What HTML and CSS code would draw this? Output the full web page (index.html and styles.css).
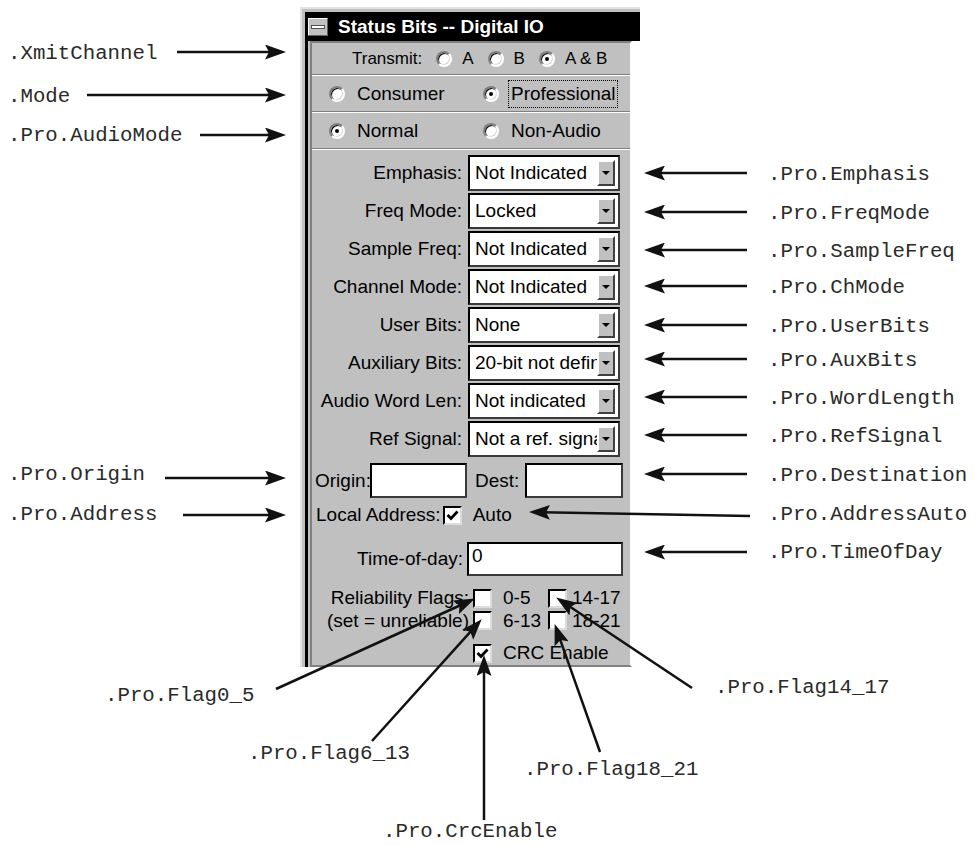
FILE: index.html
```html
<!DOCTYPE html>
<html>
<head>
<meta charset="utf-8">
<title>Status Bits -- Digital IO</title>
<link rel="stylesheet" href="styles.css">
</head>
<body>
<div class="canvas">
  <div class="window">
    <div class="tb-wrap">
      <div class="titlebar">
        <svg class="sysmenu" width="20" height="18" viewBox="0 0 20 18">
          <rect x="0" y="0" width="20" height="18" fill="#c0c0c0"/>
          <path d="M0.5 17.5 H19.5 V0.5" stroke="#606060" fill="none"/>
          <path d="M0.5 17 V0.5 H19" stroke="#ffffff" fill="none"/>
          <rect x="3.5" y="7.5" width="13" height="3" fill="#ffffff" stroke="#505050"/>
        </svg>
        <span class="title">Status Bits -- Digital IO</span>
      </div>
    </div>
    <div class="body">
      <div class="frame">
        <div class="content">
          <div class="row-xmit">
            <span>Transmit:</span>
            <span class="opt"><span class="radio"></span>A</span>
            <span class="opt"><span class="radio"></span>B</span>
            <span class="opt"><span class="radio on"></span>A &amp; B</span>
          </div>
          <div class="divider"></div>
          <div class="row-pair">
            <span class="opt"><span class="radio"></span>Consumer</span>
            <span class="opt"><span class="radio on"></span><span class="focus">Professional</span></span>
          </div>
          <div class="divider"></div>
          <div class="row-pair">
            <span class="opt"><span class="radio on"></span>Normal</span>
            <span class="opt"><span class="radio"></span>Non-Audio</span>
          </div>
          <div class="divider"></div>
          <div class="fields">
            <span class="flabel">Emphasis:</span>
            <div class="combo"><span class="val">Not Indicated</span><span class="drop"></span></div>
            <span class="flabel">Freq Mode:</span>
            <div class="combo"><span class="val">Locked</span><span class="drop"></span></div>
            <span class="flabel">Sample Freq:</span>
            <div class="combo"><span class="val">Not Indicated</span><span class="drop"></span></div>
            <span class="flabel">Channel Mode:</span>
            <div class="combo"><span class="val">Not Indicated</span><span class="drop"></span></div>
            <span class="flabel">User Bits:</span>
            <div class="combo"><span class="val">None</span><span class="drop"></span></div>
            <span class="flabel">Auxiliary Bits:</span>
            <div class="combo"><span class="val">20-bit not defined</span><span class="drop"></span></div>
            <span class="flabel">Audio Word Len:</span>
            <div class="combo"><span class="val">Not indicated</span><span class="drop"></span></div>
            <span class="flabel">Ref Signal:</span>
            <div class="combo"><span class="val">Not a ref. signal</span><span class="drop"></span></div>
          </div>
          <div class="orow">
            <span class="olabel">Origin:</span>
            <span class="tbox origin"></span>
            <span class="dlabel">Dest:</span>
            <span class="tbox dest"></span>
          </div>
          <div class="arow">
            <span>Local Address:</span>
            <span class="cb addr"><svg class="tick" viewBox="0 0 15 15" width="15" height="15"><path d="M2.5 7 L6 10.5 L12.5 3.5" fill="none" stroke="#000" stroke-width="2.8"/></svg></span>
            <span class="auto">Auto</span>
          </div>
          <div class="trow">
            <span class="tlabel">Time-of-day:</span>
            <span class="tbox time">0</span>
          </div>
          <div class="flags">
            <span class="rlabel">Reliability Flags:</span>
            <span class="cb"></span>
            <span class="ftext">0-5</span>
            <span class="cb"></span>
            <span class="ftext2">14-17</span>
            <span class="rlabel">(set = unreliable)</span>
            <span class="cb"></span>
            <span class="ftext">6-13</span>
            <span class="cb"></span>
            <span class="ftext2">18-21</span>
          </div>
          <div class="crc">
            <span class="cb"><svg class="tick" viewBox="0 0 15 15" width="15" height="15"><path d="M2.5 7 L6 10.5 L12.5 3.5" fill="none" stroke="#000" stroke-width="2.8"/></svg></span>
            <span class="ftext">CRC Enable</span>
          </div>
        </div>
      </div>
    </div>
  </div>

  <svg class="overlay" width="977" height="845" viewBox="0 0 977 845">
    <defs>
      <marker id="ah" markerUnits="userSpaceOnUse" markerWidth="21" markerHeight="15" viewBox="0 0 21 15" refX="8" refY="7.5" orient="auto">
        <path d="M0 0 L21 7.5 L0 15 L4 7.5 Z" fill="#111"/>
      </marker>
    </defs>
    <g class="arrows">
      <line x1="177" y1="52" x2="273" y2="52" marker-end="url(#ah)"/>
      <line x1="87" y1="95" x2="273" y2="95" marker-end="url(#ah)"/>
      <line x1="200" y1="135" x2="273" y2="135" marker-end="url(#ah)"/>
      <line x1="165" y1="478" x2="273" y2="478" marker-end="url(#ah)"/>
      <line x1="183" y1="515" x2="273" y2="515" marker-end="url(#ah)"/>

      <line x1="747" y1="173" x2="657" y2="173" marker-end="url(#ah)"/>
      <line x1="747" y1="212" x2="657" y2="212" marker-end="url(#ah)"/>
      <line x1="747" y1="250" x2="657" y2="250" marker-end="url(#ah)"/>
      <line x1="747" y1="286" x2="657" y2="286" marker-end="url(#ah)"/>
      <line x1="747" y1="325" x2="657" y2="325" marker-end="url(#ah)"/>
      <line x1="747" y1="359" x2="657" y2="359" marker-end="url(#ah)"/>
      <line x1="747" y1="397" x2="657" y2="397" marker-end="url(#ah)"/>
      <line x1="747" y1="435" x2="657" y2="435" marker-end="url(#ah)"/>
      <line x1="747" y1="474" x2="657" y2="474" marker-end="url(#ah)"/>
      <line x1="750" y1="516" x2="542" y2="512.2" marker-end="url(#ah)"/>
      <line x1="747" y1="552" x2="657" y2="552" marker-end="url(#ah)"/>

      <line x1="276" y1="689" x2="463.1" y2="604" marker-end="url(#ah)"/>
      <line x1="372" y1="741" x2="473" y2="628.9" marker-end="url(#ah)"/>
      <line x1="484" y1="820" x2="484" y2="668" marker-end="url(#ah)"/>
      <line x1="600" y1="752" x2="559" y2="636.3" marker-end="url(#ah)"/>
      <line x1="692" y1="688" x2="567" y2="604.7" marker-end="url(#ah)"/>
    </g>
    <g class="labels">
      <text x="8" y="58.5">.XmitChannel</text>
      <text x="8" y="101.5">.Mode</text>
      <text x="8" y="140.5">.Pro.AudioMode</text>
      <text x="8" y="479.5">.Pro.Origin</text>
      <text x="8" y="519.5">.Pro.Address</text>

      <text x="768" y="179.5">.Pro.Emphasis</text>
      <text x="768" y="218.5">.Pro.FreqMode</text>
      <text x="768" y="256.5">.Pro.SampleFreq</text>
      <text x="768" y="292.5">.Pro.ChMode</text>
      <text x="768" y="331.5">.Pro.UserBits</text>
      <text x="768" y="365.5">.Pro.AuxBits</text>
      <text x="768" y="403.5">.Pro.WordLength</text>
      <text x="768" y="441.5">.Pro.RefSignal</text>
      <text x="768" y="480.5">.Pro.Destination</text>
      <text x="768" y="519.5">.Pro.AddressAuto</text>
      <text x="768" y="557.5">.Pro.TimeOfDay</text>

      <text x="105" y="700.5">.Pro.Flag0_5</text>
      <text x="715" y="692.5">.Pro.Flag14_17</text>
      <text x="248" y="758.5">.Pro.Flag6_13</text>
      <text x="524" y="774.5">.Pro.Flag18_21</text>
      <text x="383" y="836.5">.Pro.CrcEnable</text>
    </g>
  </svg>
</div>
</body>
</html>
```

FILE: styles.css
```css
html, body {
  margin: 0;
  padding: 0;
  background: #ffffff;
}

.canvas {
  position: relative;
  width: 977px;
  height: 845px;
  overflow: hidden;
}

.window {
  position: absolute;
  left: 300px;
  top: 7px;
  width: 340px;
  font-family: "Liberation Sans", Arial, sans-serif;
  font-size: 19px;
  color: #000;
}

.tb-wrap {
  border-left: 2px solid #e2e2e2;
  border-top: 2px solid #e2e2e2;
  background: #c0c0c0;
  padding: 3px 0 0 3px;
}

.titlebar {
  height: 29px;
  background: #000;
  display: flex;
  align-items: center;
  gap: 10px;
  padding-left: 3px;
}

.sysmenu {
  flex: none;
  display: block;
}

.title {
  color: #fff;
  font-weight: bold;
  font-size: 19px;
  white-space: nowrap;
}

.body {
  width: 327px;
  border-left: 2px solid #e2e2e2;
  background: #c0c0c0;
  padding-left: 3px;
}

.frame {
  border-left: 3px solid #000;
  padding-left: 2px;
}

.content {
  border: 2px solid;
  border-color: #808080 #ffffff #808080 #808080;
}

.divider {
  height: 1px;
  background: #808080;
  border-bottom: 1px solid #ffffff;
}

.row-xmit {
  height: 31px;
  display: flex;
  align-items: center;
  gap: 14px;
  padding-left: 40px;
  font-size: 17px;
  white-space: nowrap;
}

.opt {
  display: flex;
  align-items: center;
  gap: 10px;
  white-space: nowrap;
}

.row-pair {
  height: 35px;
  display: grid;
  grid-template-columns: 154px auto;
  align-items: center;
  padding-left: 17px;
}

.row-pair .opt {
  gap: 12px;
}

.radio {
  position: relative;
  flex: none;
  width: 12px;
  height: 12px;
  border-radius: 50%;
  border: 2px solid;
  border-color: #808080 #ffffff #ffffff #808080;
  background: #fff;
  box-shadow: inset 1px 1px 0 #000, inset -1px -1px 0 #d8d8d8;
}

.radio.on::after {
  content: "";
  position: absolute;
  left: 4px;
  top: 4px;
  width: 4px;
  height: 4px;
  border-radius: 50%;
  background: #000;
}

.focus {
  border: 1px dotted #000;
  padding: 2px 1px 2px 2px;
  margin-left: -3px;
}

.fields {
  display: grid;
  grid-template-columns: 150px 152px;
  column-gap: 6px;
  row-gap: 2px;
  padding-top: 5px;
}

.flabel {
  text-align: right;
  align-self: center;
  white-space: nowrap;
}

.combo {
  height: 36px;
  box-sizing: border-box;
  display: flex;
  background: #fff;
  border: 2px solid;
  border-color: #000 #3a3a3a #3a3a3a #000;
}

.val {
  flex: 1;
  min-width: 0;
  overflow: hidden;
  white-space: nowrap;
  padding-left: 5px;
  line-height: 32px;
}

.drop {
  flex: none;
  width: 18px;
  margin: 3px 3px 3px 0;
  box-sizing: border-box;
  background: #c0c0c0;
  border: 2px solid;
  border-color: #ffffff #404040 #404040 #ffffff;
  display: flex;
  align-items: center;
  justify-content: center;
}

.drop::after {
  content: "";
  border-left: 4px solid transparent;
  border-right: 4px solid transparent;
  border-top: 4px solid #000;
}

.tbox {
  display: block;
  box-sizing: border-box;
  background: #fff;
  border: 2px solid;
  border-color: #000 #3a3a3a #3a3a3a #000;
}

.orow {
  display: flex;
  align-items: center;
  height: 35px;
  margin-top: 6px;
  padding-left: 3px;
}

.olabel {
  width: 55px;
  white-space: nowrap;
}

.tbox.origin {
  width: 97px;
  height: 35px;
}

.dlabel {
  width: 50px;
  margin-left: 8px;
  white-space: nowrap;
}

.tbox.dest {
  width: 98px;
  height: 35px;
}

.arow {
  display: flex;
  align-items: center;
  height: 30px;
  margin-top: 2px;
  padding-left: 4px;
  white-space: nowrap;
}

.cb {
  flex: none;
  width: 15px;
  height: 15px;
  border: 2px solid;
  border-color: #000 #dcdcdc #dcdcdc #000;
  background: #fff;
  display: flex;
  align-items: center;
  justify-content: center;
}

.tick {
  display: block;
}

.cb.addr {
  margin-left: 2px;
}

.auto {
  margin-left: 11px;
}

.trow {
  display: flex;
  height: 34px;
  margin-top: 12px;
}

.tlabel {
  width: 151px;
  text-align: right;
  align-self: center;
  white-space: nowrap;
}

.tbox.time {
  margin-left: 4px;
  width: 156px;
  padding: 0 3px;
  line-height: 24px;
}

.flags {
  display: grid;
  grid-template-columns: 161px 19px 56px 19px auto;
  grid-template-rows: 22px 23px;
  align-items: center;
  margin-top: 11px;
}

.rlabel {
  text-align: right;
  padding-right: 4px;
  white-space: nowrap;
}

.ftext {
  padding-left: 11px;
  white-space: nowrap;
}

.ftext2 {
  padding-left: 5px;
  white-space: nowrap;
}

.crc {
  display: flex;
  align-items: center;
  height: 22px;
  margin-top: 10px;
  padding-left: 161px;
  padding-bottom: 1px;
}

.overlay {
  position: absolute;
  left: 0;
  top: 0;
  pointer-events: none;
}

.arrows line {
  stroke: #111;
  stroke-width: 2.5;
}

.labels text {
  font-family: "Liberation Mono", "Courier New", monospace;
  font-size: 20.75px;
  fill: #2a2a2a;
}
```
